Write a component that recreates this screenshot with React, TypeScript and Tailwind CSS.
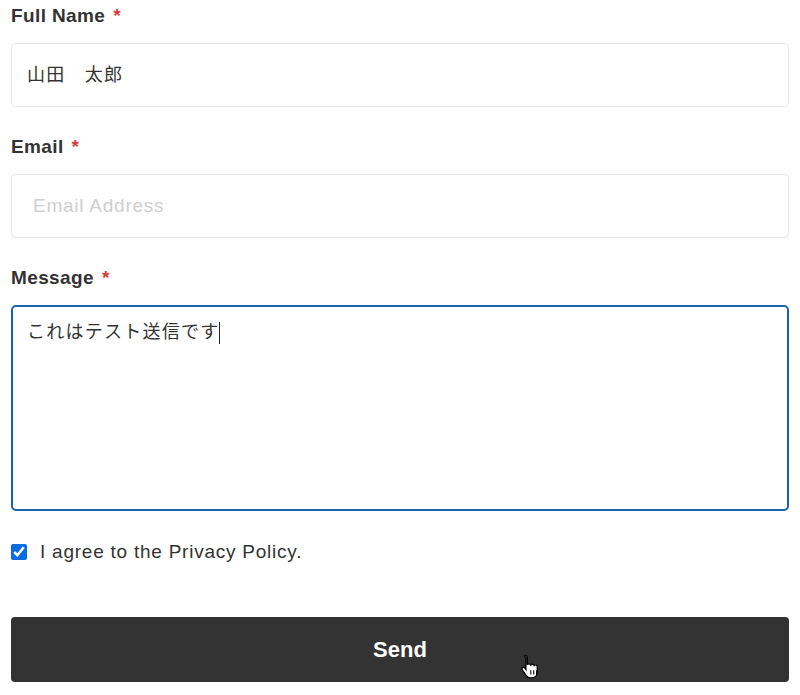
import React from 'react';

const Label: React.FC<{ text: string }> = ({ text }) => (
    <label className="flex items-center h-[32px] text-[19px] font-bold tracking-[0.02em] text-[#333]">
        {text}
        <span className="ml-[8px] text-[#d93a3a]">*</span>
    </label>
);

export default function App() {
    return (
        <div className="relative w-[800px] h-[695px] bg-white px-[11px] text-[#333] font-['Liberation_Sans','Noto_Sans_CJK_JP',sans-serif]">
            <form className="flex flex-col" onSubmit={(e) => e.preventDefault()}>
                <Label text="Full Name" />
                <div className="mt-[11px] h-[64px] flex items-center rounded-[4px] border border-[#e8e8e8] pl-[15px] text-[18px] tracking-[0.07em]">
                    山田　太郎
                </div>

                <div className="mt-[24px]">
                    <Label text="Email" />
                </div>
                <div className="mt-[11px] h-[64px] flex items-center rounded-[4px] border border-[#e8e8e8] pl-[21px] text-[19px] tracking-[0.04em] text-[#cfcfcf]">
                    Email Address
                </div>

                <div className="mt-[24px]">
                    <Label text="Message" />
                </div>
                <div className="mt-[11px] h-[206px] rounded-[5px] border-2 border-[#1c60b0] pl-[14px] pt-[12px] text-[18px] tracking-[0.07em]">
                    <span>これはテスト送信です</span>
                    <span className="inline-block w-px h-[22px] bg-[#222] align-middle -ml-px"></span>
                </div>

                <label className="mt-[28px] flex items-center gap-[13px] h-[26px] text-[19px] tracking-[0.04em]">
                    <input type="checkbox" defaultChecked className="w-[16px] h-[16px] accent-[#0a6ce0] m-0" />
                    I agree to the Privacy Policy.
                </label>

                <button type="submit" className="mt-[52px] h-[65px] rounded-[4px] bg-[#333333] text-white text-[22px] font-bold">
                    Send
                </button>
            </form>

            {/* pointer cursor over the button */}
            <svg className="absolute left-[520px] top-[654px]" width="22" height="26" viewBox="0 0 20 24">
                <path
                    d="M5 1.5c1 0 1.6.7 1.6 1.6V10c.3-.6 1-.9 1.6-.9.8 0 1.4.5 1.6 1.1.3-.5.9-.8 1.5-.8.8 0 1.4.5 1.6 1.2.3-.4.8-.6 1.3-.6 1 0 1.6.8 1.6 1.7v4.8c0 3.3-2.3 5.5-5.4 5.5H9.3c-1.7 0-3-.8-3.9-2.2L2 14.6c-.5-.8-.3-1.7.4-2.1.7-.4 1.5-.2 2 .5l.9 1.3V3.1C3.4 2.2 4 1.5 5 1.5z"
                    fill="#fff"
                    stroke="#000"
                    strokeWidth="1.2"
                />
                <path d="M9.8 15v4M12.5 15v4M15.2 15v4" stroke="#000" strokeWidth="1" />
            </svg>
        </div>
    );
}
